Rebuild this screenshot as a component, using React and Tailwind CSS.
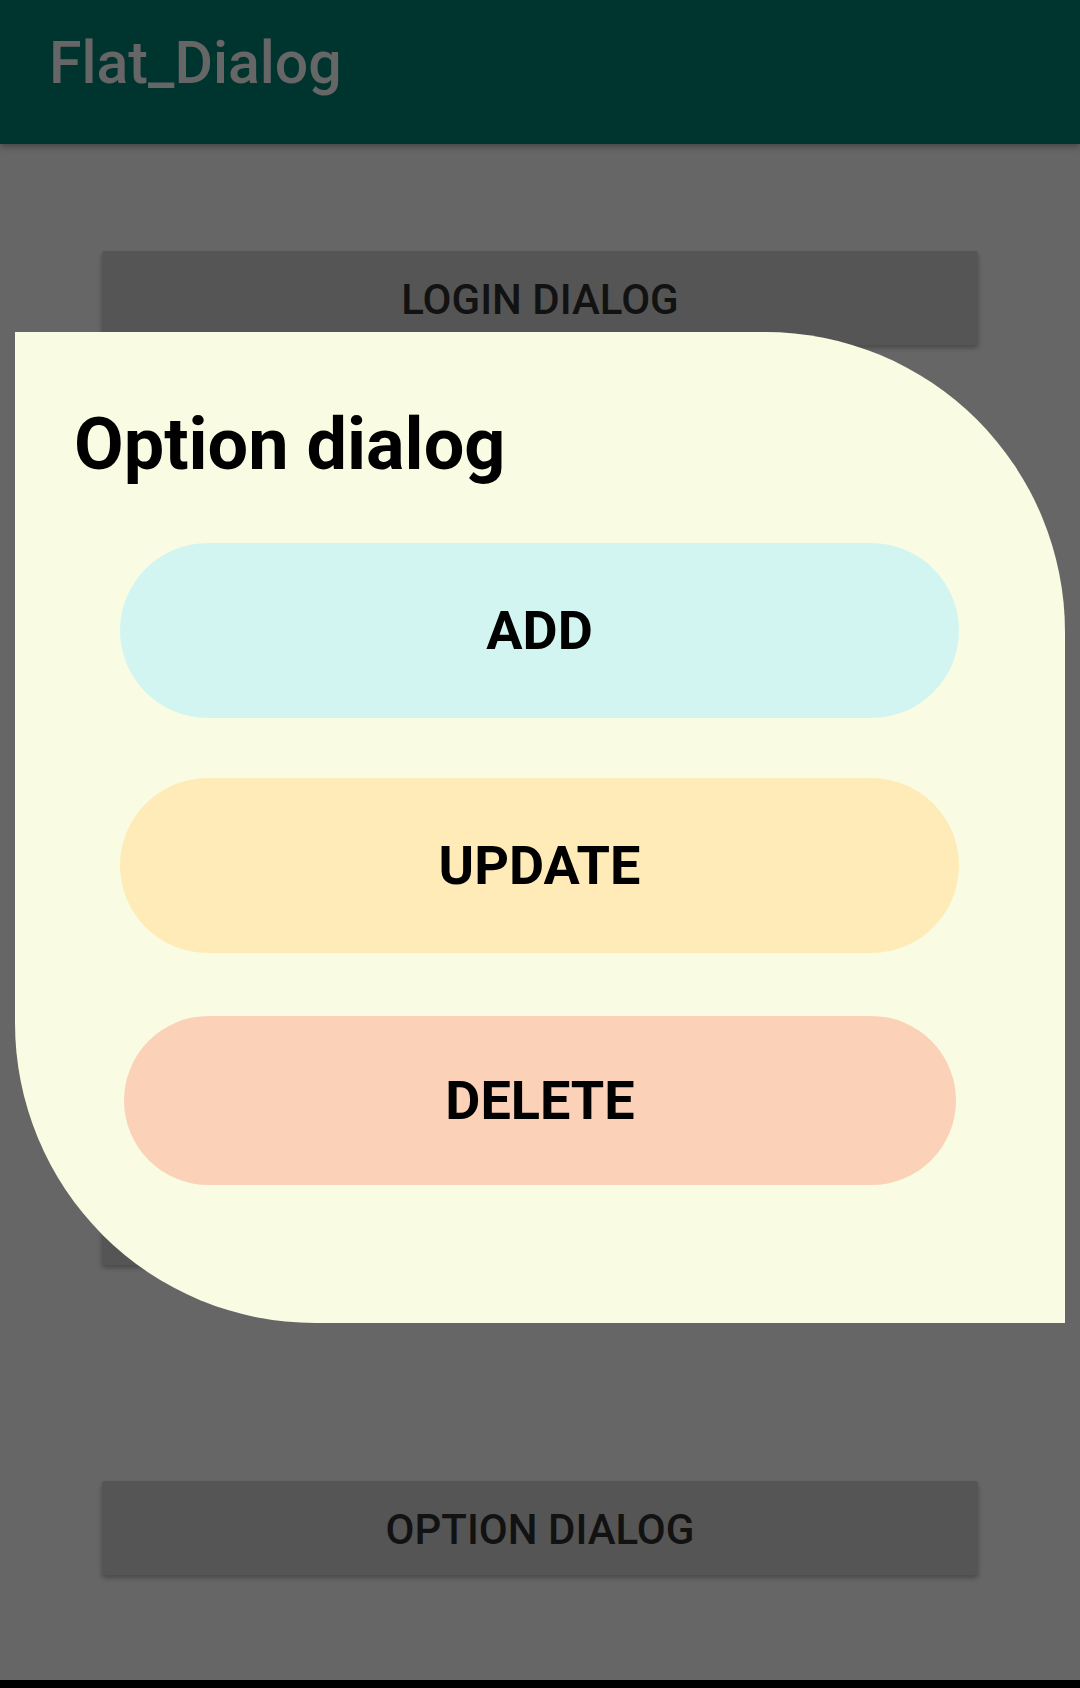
export default function App() {
  const grayBtn =
    "w-[876px] h-[94px] rounded-[3px] bg-[#555555] shadow-[0_3px_5px_rgba(0,0,0,0.28)] flex items-center justify-center pt-[3px] text-[42px] font-medium leading-none tracking-[0px] text-[#121212]";
  return (
    <div className="relative w-[1080px] h-[1688px] bg-[#666666] overflow-hidden font-['Roboto',sans-serif]">
      <div className="relative z-10 h-[144px] bg-[#00352f] shadow-[0_3px_6px_rgba(0,0,0,0.3)] pl-[49px] pt-[33px]">
        <div className="text-[59px] font-medium leading-none text-[#666666]">Flat_Dialog</div>
      </div>
      <div className="flex flex-col items-center">
        <div className={grayBtn + " mt-[107px]"}>LOGIN DIALOG</div>
        <div className={grayBtn + " mt-[826px]"}>CUSTOM DIALOG</div>
        <div className={grayBtn + " mt-[216px]"}>OPTION DIALOG</div>
      </div>
      <div className="absolute left-0 right-0 bottom-0 h-[8px] bg-black" />

      <div className="absolute left-[15px] top-[332px] w-[1050px] h-[991px] bg-[#f9fce3] rounded-tr-[300px] rounded-bl-[300px] z-20 flex flex-col">
        <div className="pl-[59px] pt-[77px] text-[72px] font-bold leading-none text-black">Option dialog</div>
        <div className="mt-[62px] ml-[105px] w-[839px] h-[175px] rounded-full bg-[#d3f5f2] flex items-center justify-center text-[54px] font-bold leading-none text-black">
          ADD
        </div>
        <div className="mt-[60px] ml-[105px] w-[839px] h-[175px] rounded-full bg-[#feebb7] flex items-center justify-center text-[54px] font-bold leading-none text-black">
          UPDATE
        </div>
        <div className="mt-[63px] ml-[109px] w-[832px] h-[169px] rounded-full bg-[#fbd2b8] flex items-center justify-center text-[54px] font-bold leading-none text-black">
          DELETE
        </div>
      </div>
    </div>
  );
}
